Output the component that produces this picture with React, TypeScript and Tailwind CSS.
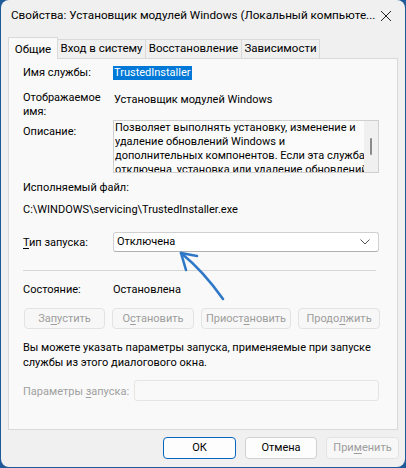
import React from "react";

const font = { fontFamily: 'Roboto, "Noto Sans", sans-serif' };

function Btn({
  children,
  className = "",
  disabled = false,
  primary = false,
}: {
  children: React.ReactNode;
  className?: string;
  disabled?: boolean;
  primary?: boolean;
}) {
  return (
    <div
      className={`flex shrink-0 items-center justify-center whitespace-nowrap rounded-[4px] border text-[11px] ${
        primary
          ? "border-[#0a64c2] bg-[#fdfdfd] text-black"
          : disabled
          ? "border-[#e3e3e3] bg-[#f7f7f7] text-[#9d9d9d]"
          : "border-[#d0d0d0] bg-[#fdfdfd] text-black"
      } ${className}`}
    >
      {children}
    </div>
  );
}

const U = ({ children }: { children: React.ReactNode }) => (
  <span className="underline underline-offset-2">{children}</span>
);

export default function App() {
  return (
    <div className="w-[406px] h-[468px] bg-[#1f5a98] whitespace-nowrap" style={font}>
      <div className="relative ml-[1px] w-[404px] h-[467px] rounded-[8px] bg-[#f0f0f0] overflow-hidden text-black">
        {/* Title bar */}
        <div className="flex h-[32px] items-center justify-between pl-[10px] pr-[12px]">
          <span className="text-[11.7px]">
            Свойства: Установщик модулей Windows (Локальный компьюте...
          </span>
          <svg width="12" height="12" viewBox="0 0 12 12" className="mr-[1px] shrink-0">
            <path d="M1 1 L11 11 M11 1 L1 11" stroke="#222" strokeWidth="1" />
          </svg>
        </div>

        {/* Tabs */}
        <div className="flex h-[26px] items-end pl-[7px] text-[11.5px]">
          <div className="relative z-10 flex h-[22px] w-[50px] shrink-0 items-start justify-center border border-b-0 border-[#d9d9d9] bg-[#f9f9f9] pt-[3px] mb-[-1px]">
            Общие
          </div>
          <div className="flex h-[19px] w-[88px] shrink-0 items-center justify-center border border-l-0 border-b-0 border-[#d9d9d9] bg-[#f0f0f0]">
            Вход в систему
          </div>
          <div className="flex h-[19px] w-[96px] shrink-0 items-center justify-center border border-l-0 border-b-0 border-[#d9d9d9] bg-[#f0f0f0]">
            Восстановление
          </div>
          <div className="flex h-[19px] w-[78px] shrink-0 items-center justify-center border border-l-0 border-b-0 border-[#d9d9d9] bg-[#f0f0f0]">
            Зависимости
          </div>
        </div>

        {/* Panel */}
        <div className="ml-[7px] w-[390px] h-[372px] border border-[#d9d9d9] bg-[#f9f9f9] pl-[14px] text-[11px] leading-[14px]">
          {/* Service name */}
          <div className="mt-[7px] flex h-[14px] items-center">
            <span className="w-[90px] shrink-0">Имя службы:</span>
            <span className="bg-[#0078d7] px-[1px] text-white">TrustedInstaller</span>
          </div>

          {/* Display name */}
          <div className="mt-[11px] flex h-[28px]">
            <span className="w-[91px] shrink-0">
              Отображаемое
              <br />
              имя:
            </span>
            <span className="mt-[2px]">Установщик модулей Windows</span>
          </div>

          {/* Description */}
          <div className="mt-[1px] flex h-[53px]">
            <span className="w-[90px] shrink-0 mt-[5px]">Описание:</span>
            <div className="flex w-[266px] shrink-0 border border-[#cfcfcf] bg-[#fbfbfb]">
              <div className="flex-1 overflow-hidden pl-[1px] leading-[14px]">
                Позволяет выполнять установку, изменение и
                <br />
                удаление обновлений Windows и
                <br />
                дополнительных компонентов. Если эта служба
                <br />
                отключена, установка или удаление обновлений
              </div>
              <div className="flex w-[14px] shrink-0 justify-center bg-[#f0f0f0] pt-[17px]">
                <div className="h-[17px] w-[2px] rounded-full bg-[#8a8a8a]" />
              </div>
            </div>
          </div>

          {/* Executable */}
          <div className="mt-[8px] h-[14px]">Исполняемый файл:</div>
          <div className="mt-[8px] h-[14px]">C:\WINDOWS\servicing\TrustedInstaller.exe</div>

          {/* Startup type */}
          <div className="mt-[15px] flex h-[20px]">
            <span className="w-[90px] shrink-0 mt-[4px]">
              <U>Т</U>ип запуска:
            </span>
            <div className="flex w-[266px] shrink-0 items-center justify-between rounded-[3px] border border-[#d0d0d0] border-b-[#b0b0b0] bg-white pl-[3px] pr-[8px]">
              <span>Отключена</span>
              <svg width="10" height="6" viewBox="0 0 10 6">
                <path d="M0.5 0.5 L5 5 L9.5 0.5" fill="none" stroke="#555" strokeWidth="1" />
              </svg>
            </div>
          </div>

          {/* Separator */}
          <div className="mt-[18px] h-px w-[353px] bg-[#d6d6d6]" />

          {/* State */}
          <div className="mt-[12px] flex h-[14px]">
            <span className="w-[90px] shrink-0">Состояние:</span>
            <span>Остановлена</span>
          </div>

          {/* Control buttons */}
          <div className="mt-[11px] flex h-[21px] gap-[7px] pl-[1px]">
            <Btn disabled className="w-[81px]">
              За<U>п</U>устить
            </Btn>
            <Btn disabled className="w-[82px]">
              О<U>с</U>тановить
            </Btn>
            <Btn disabled className="w-[90px]">
              Приост<U>а</U>новить
            </Btn>
            <Btn disabled className="w-[82px]">
              Продо<U>л</U>жить
            </Btn>
          </div>

          {/* Hint */}
          <div className="mt-[11px] leading-[15px]">
            Вы можете указать параметры запуска, применяемые при запуске
            <br />
            службы из этого диалогового окна.
          </div>

          {/* Params */}
          <div className="mt-[10px] flex h-[21px]">
            <span className="w-[111px] shrink-0 mt-[5px] text-[#a0a0a0]">
              Параметры <U>з</U>апуска:
            </span>
            <div className="w-[245px] shrink-0 rounded-[3px] border border-[#e4e4e4] bg-[#f9f9f9]" />
          </div>
        </div>

        {/* Dialog buttons */}
        <div className="mt-[7px] flex h-[22px] justify-end gap-[9px] pr-[6px]">
          <Btn primary className="w-[73px]">
            ОК
          </Btn>
          <Btn className="w-[72px]">Отмена</Btn>
          <Btn disabled className="w-[73px]">
            При<U>м</U>енить
          </Btn>
        </div>

        {/* Hand-drawn arrow annotation */}
        <svg
          className="pointer-events-none absolute left-0 top-0"
          width="404"
          height="467"
          viewBox="0 0 404 467"
        >
          <g fill="none" stroke="#2f78c8" strokeWidth="2.6" strokeLinecap="round" strokeLinejoin="round">
            <path d="M222 299 C 210 282, 196 266, 180 253" />
            <path d="M196 256 L180 253 L185 270" />
          </g>
        </svg>
      </div>
    </div>
  );
}
